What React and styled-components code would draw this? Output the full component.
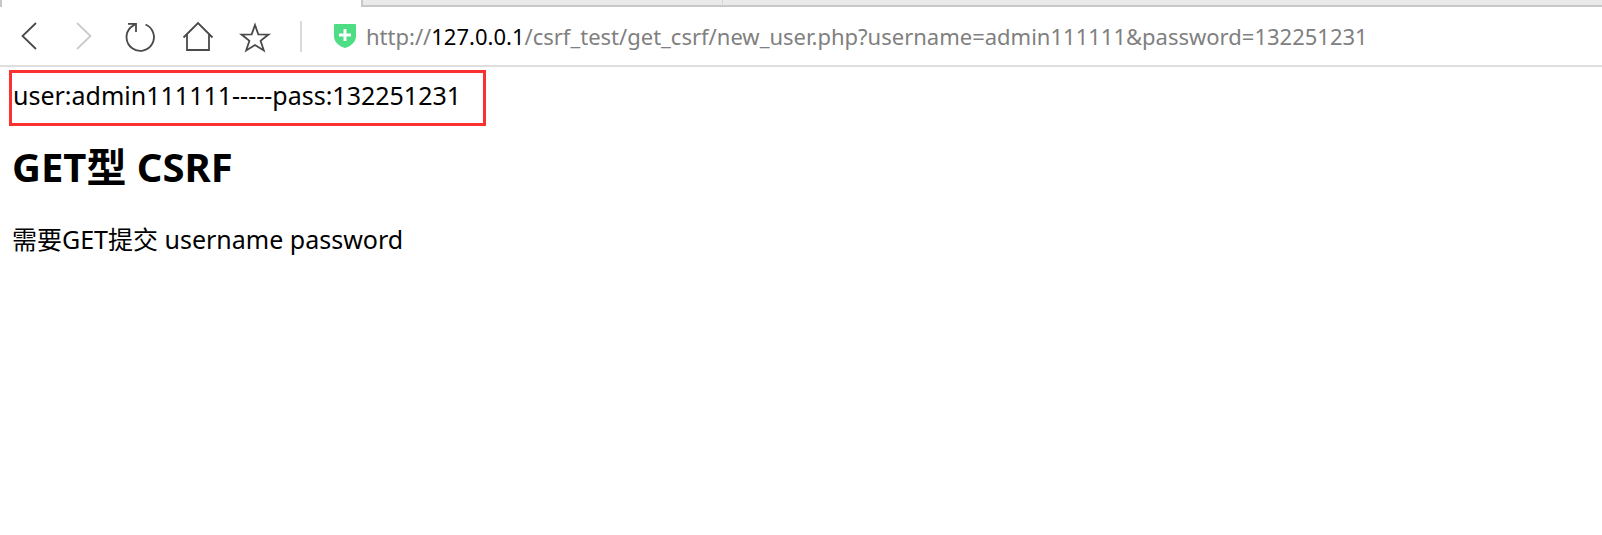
import React from "react";
import styled, { createGlobalStyle } from "styled-components";

const GlobalStyle = createGlobalStyle`
  body {
    margin: 0;
    background: #fff;
    color: #000;
    font-family: "Noto Sans", "Noto Sans CJK SC", sans-serif;
  }
`;

const TabStrip = styled.div`
  display: flex;
  height: 7px;
`;

const Tab = styled.div`
  box-sizing: border-box;
  width: ${({ $width }) => $width};
  flex-grow: ${({ $grow }) => ($grow ? 1 : 0)};
  background: ${({ $active }) => ($active ? "#fff" : "#eaeaea")};
  border-left: ${({ $edge }) => $edge};
  border-bottom: ${({ $active }) => ($active ? "none" : "2px solid #c8c8c8")};
`;

const Toolbar = styled.header`
  display: flex;
  align-items: center;
  height: 58px;
  border-bottom: 2px solid #dedede;
`;

const NavButtons = styled.nav`
  display: flex;
  gap: 17px;
  padding-left: 9px;
`;

const NavButton = styled.button`
  display: flex;
  padding: 0;
  border: none;
  background: none;
  color: #4a4a4a;
  &:disabled {
    color: #cbcbcb;
  }
`;

const Icon = styled.svg`
  width: 40px;
  height: 40px;
  fill: none;
  stroke: currentColor;
  stroke-width: 1.8;
`;

const Divider = styled.div`
  width: 2px;
  height: 31px;
  margin-left: 23px;
  background: #dadada;
`;

const Shield = styled.svg`
  flex-shrink: 0;
  width: 22px;
  height: 24px;
  margin-left: 32px;
`;

const Address = styled.div`
  flex: 1;
  margin-left: 10px;
  color: #808080;
  font-size: 22px;
  line-height: 32px;
  white-space: nowrap;
  outline: none;
`;

const Host = styled.span`
  color: #000;
`;

const Page = styled.main`
  padding: 3px 9px;
`;

const Result = styled.div`
  width: fit-content;
  padding: 6px 22px 12px 1px;
  border: 3px solid #fb3030;
  font-size: 25px;
  line-height: 32px;
`;

const Title = styled.h2`
  margin: 15px 3px 0;
  font-size: 40px;
  line-height: 52px;
`;

const Hint = styled.p`
  margin: 30px 3px 0;
  font-size: 25px;
  line-height: 32px;
`;

const App = () => {
  return (
    <>
      <GlobalStyle />
      <TabStrip>
        <Tab $active $width="361px" $edge="2px solid #c8c8c8" />
        <Tab $width="361px" $edge="2px solid #c8c8c8" />
        <Tab $grow $edge="1px solid #d4d4d4" />
      </TabStrip>
      <Toolbar>
        <NavButtons>
          <NavButton aria-label="Back">
            <Icon viewBox="0 0 40 40">
              <path d="M27 7L13.5 20L27 33" />
            </Icon>
          </NavButton>
          <NavButton aria-label="Forward" disabled>
            <Icon viewBox="0 0 40 40">
              <path d="M11 7L24.5 20L11 33" />
            </Icon>
          </NavButton>
          <NavButton aria-label="Reload">
            <Icon viewBox="0 0 40 40">
              <path d="M22.5 8.5A13.7 13.7 0 1 1 7.5 11.5L12.5 8M5 7.8H13V16" />
            </Icon>
          </NavButton>
          <NavButton aria-label="Home">
            <Icon viewBox="0 0 40 40">
              <path d="M3.5 21.5L18 7L32.5 21.5M7 18.5V34H29V18.5" />
            </Icon>
          </NavButton>
          <NavButton aria-label="Bookmark">
            <Icon viewBox="0 0 40 40">
              <path d="M18 9L21.3 18.3L31.5 18.5L23.6 24.8L26.8 34.5L18 29L9.2 34.5L12.4 24.8L4.5 18.5L14.7 18.3Z" />
            </Icon>
          </NavButton>
        </NavButtons>
        <Divider />
        <Shield viewBox="0 0 22 24" role="img" aria-label="Safe site">
          <path
            d="M1 0H21Q22 0 22 1V12C22 18 17 22 11 24C5 22 0 18 0 12V1Q0 0 1 0Z"
            fill="#4ddd83"
          />
          <path d="M11 5V17M5 11H17" stroke="#fff" strokeWidth="3" />
        </Shield>
        <Address
          role="textbox"
          aria-label="Address"
          contentEditable
          suppressContentEditableWarning
          spellCheck={false}
        >
          http://<Host>127.0.0.1</Host>
          /csrf_test/get_csrf/new_user.php?username=admin111111&amp;password=132251231
        </Address>
      </Toolbar>
      <Page>
        <Result>user:admin111111-----pass:132251231</Result>
        <Title>GET型 CSRF</Title>
        <Hint>需要GET提交 username password</Hint>
      </Page>
    </>
  );
};

export default App;
